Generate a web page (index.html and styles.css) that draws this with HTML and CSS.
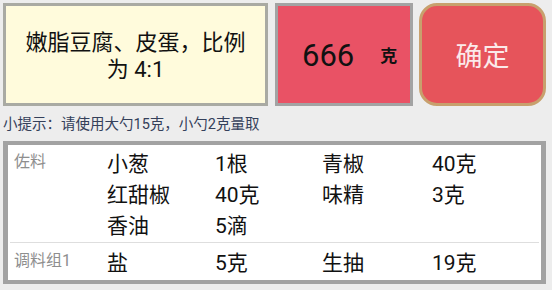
FILE: index.html
```html
<!DOCTYPE html>
<html lang="zh-CN">
<head>
    <meta charset="UTF-8">
    <title>调料称量</title>
    <link rel="stylesheet" href="styles.css">
</head>
<body>
    <div class="top_bar">
        <div class="t_tip">嫩脂豆腐、皮蛋，比例<br>为 4:1</div>
        <div class="t_weight">
            <span class="t_num">666</span>
            <span class="t_unit">克</span>
        </div>
        <button class="t_ok">确定</button>
    </div>
    <p class="hint">小提示：请使用大勺15克，小勺2克量取</p>
    <div class="sauce_list">
        <div class="s_group">
            <div class="s_label">佐料</div>
            <div class="s_items">
                <span>小葱</span><span>1根</span>
                <span>青椒</span><span>40克</span>
                <span>红甜椒</span><span>40克</span>
                <span>味精</span><span>3克</span>
                <span>香油</span><span>5滴</span>
            </div>
        </div>
        <div class="s_group">
            <div class="s_label">调料组1</div>
            <div class="s_items">
                <span>盐</span><span>5克</span>
                <span>生抽</span><span>19克</span>
            </div>
        </div>
    </div>
</body>
</html>
```

FILE: styles.css
```css
body {
    margin: 0;
    padding: 3px 6px 0 3px;
    background-color: #ededed;
    font-family: Roboto, "Noto Sans CJK SC", sans-serif;
    color: #111;
}
.top_bar {
    display: flex;
    height: 103px;
}
.t_tip {
    width: 259px;
    border: 3px solid #a9aaa3;
    background-color: #fffbdc;
    display: flex;
    align-items: center;
    justify-content: center;
    text-align: center;
    font-size: 22px;
    line-height: 27px;
    padding-top: 2px;
}
.t_weight {
    width: 132px;
    margin-left: 7px;
    border: 3px solid #a3a3a3;
    background-color: #e95265;
    display: flex;
    align-items: center;
}
.t_num {
    font-size: 31px;
    margin-left: 24px;
    padding-top: 2px;
}
.t_unit {
    font-size: 17px;
    font-weight: bold;
    margin-left: 26px;
}
.t_ok {
    width: 127px;
    margin-left: 6px;
    border: 3px solid #c8a06d;
    border-radius: 18px;
    background-color: #e6545b;
    color: #fbeaea;
    font-family: Roboto, "Noto Sans CJK SC", sans-serif;
    font-size: 27px;
    padding: 0;
    outline: none;
}
.hint {
    margin: 0;
    height: 35px;
    line-height: 37px;
    font-size: 14.5px;
    color: #34405a;
}
.sauce_list {
    border: 5px solid #a2a2a2;
    border-top-width: 4px;
    border-bottom-width: 4px;
    background-color: #fff;
    padding: 0 2px;
}
.s_group {
    display: flex;
    padding-top: 4px;
}
.s_group + .s_group {
    border-top: 1px solid #dedede;
    padding-top: 5px;
    padding-bottom: 1px;
}
.s_label {
    width: 93px;
    padding-left: 4px;
    font-size: 16px;
    line-height: 20px;
    color: #8e8e8e;
    padding-top: 3px;
}
.s_items {
    flex: 1;
    display: grid;
    grid-template-columns: 108px 107px 110px 1fr;
    font-size: 21px;
    line-height: 31px;
}
```
